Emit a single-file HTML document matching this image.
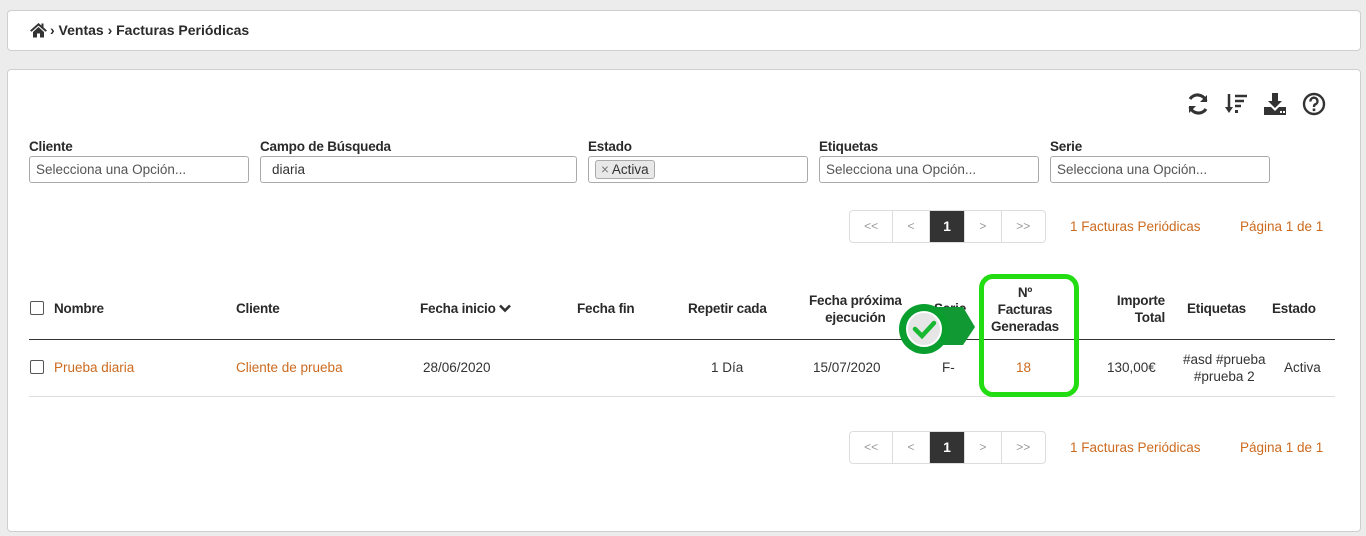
<!DOCTYPE html>
<html><head><meta charset="utf-8"><style>
body{margin:0;width:1366px;height:536px;background:#ececec;font-family:"Liberation Sans",sans-serif;font-size:13.5px;color:#333;position:relative;overflow:hidden}
.p{position:absolute;background:#fff;border:1px solid #cfcfcf;border-radius:4px}
.a{position:absolute;white-space:nowrap}
.o{color:#cc6a1f}
.h{font-weight:bold;font-size:13.5px;color:#2a2a2a;letter-spacing:-.2px}
.lbl{font-weight:bold;font-size:13.5px;color:#2a2a2a;letter-spacing:-.2px}
.in{position:absolute;height:27px;border:1px solid #aaa;border-radius:3px;box-sizing:border-box;font-size:13.5px;color:#555;padding:5px 6px;white-space:nowrap}
.pg{position:absolute;height:33px;border:1px solid #ddd;border-radius:4px;display:flex;box-sizing:border-box;overflow:hidden}
.pg div{border-right:1px solid #ddd;text-align:center;line-height:31px;color:#999;font-size:12px}
.pg div:last-child{border-right:none}
.pg .c{background:#333;color:#fff;font-weight:bold;font-size:14px}
.cb{position:absolute;width:12px;height:12px;border:1px solid #555;border-radius:2px}
</style></head><body>
<div class="p" style="left:7px;top:10px;width:1352px;height:39px"></div>
<svg class="a" style="left:29px;top:22px" width="19" height="16" viewBox="0 0 19 16"><path d="M9.5 1 L1 8.5 L2.5 9.8 L9.5 3.6 L16.5 9.8 L18 8.5 L14.5 5.4 V1.5 H12.5 V3.6 Z M4 10 V15.5 H8 V11.5 H11 V15.5 H15 V10 L9.5 5 Z" fill="#333"/></svg>
<div class="a" style="left:50px;top:22px;font-weight:bold;font-size:14px;color:#2a2a2a">› Ventas › Facturas Periódicas</div>

<div class="p" style="left:7px;top:69px;width:1352px;height:461px"></div>
<svg class="a" style="left:1186px;top:93px" width="24" height="22" viewBox="0 0 24 22"><path d="M20 8 A9 9 0 0 0 4 6 M4 14 A9 9 0 0 0 20 16" stroke="#333" stroke-width="3.2" fill="none"/><path d="M21 2 V9 H14 Z M3 20 V13 H10 Z" fill="#333"/></svg>
<svg class="a" style="left:1225px;top:93px" width="24" height="22" viewBox="0 0 24 22"><path d="M4 1 V18" stroke="#333" stroke-width="2.5"/><path d="M0 14 L4 20 L8 14 Z" fill="#333"/><path d="M10 3 H22 M10 8 H19 M10 13 H16" stroke="#333" stroke-width="2.5"/><rect x="10" y="17" width="3" height="3" fill="#333"/></svg>
<svg class="a" style="left:1263px;top:92px" width="24" height="24" viewBox="0 0 24 24"><path d="M9 1 H15 V9 H19 L12 16 L5 9 H9 Z" fill="#333"/><path d="M1 15 H8 L12 19 L16 15 H23 V23 H1 Z" fill="#333"/><rect x="17" y="19" width="2" height="2" fill="#fff"/><rect x="20" y="19" width="2" height="2" fill="#fff"/></svg>
<svg class="a" style="left:1302px;top:92px" width="24" height="24" viewBox="0 0 24 24"><circle cx="12" cy="12" r="10" stroke="#333" stroke-width="2.4" fill="none"/><path d="M8.5 9.5 A3.5 3.5 0 1 1 13 12.5 C12 13 12 14 12 15" stroke="#333" stroke-width="2.4" fill="none"/><rect x="10.7" y="16.5" width="2.6" height="2.6" fill="#333"/></svg>

<div class="a lbl" style="left:29px;top:139px">Cliente</div>
<div class="in" style="left:29px;top:156px;width:220px">Selecciona una Opción...</div>
<div class="a lbl" style="left:260px;top:139px">Campo de Búsqueda</div>
<div class="in" style="left:260px;top:156px;width:317px;color:#333;padding-left:11px">diaria</div>
<div class="a lbl" style="left:588px;top:139px">Estado</div>
<div class="in" style="left:588px;top:156px;width:220px;padding:3px 6px"><span style="display:inline-block;border:1px solid #aaa;border-radius:3px;background:#e8e8e8;padding:1px 5px;color:#333;font-size:13.5px"><span style="color:#777">×</span> Activa</span></div>
<div class="a lbl" style="left:819px;top:139px">Etiquetas</div>
<div class="in" style="left:819px;top:156px;width:220px">Selecciona una Opción...</div>
<div class="a lbl" style="left:1050px;top:139px">Serie</div>
<div class="in" style="left:1050px;top:156px;width:220px">Selecciona una Opción...</div>

<div class="pg" style="left:849px;top:210px;width:197px"><div style="width:43px">&lt;&lt;</div><div style="width:36px">&lt;</div><div class="c" style="width:35px">1</div><div style="width:36px">&gt;</div><div style="width:44px">&gt;&gt;</div></div>
<div class="a o" style="left:1070px;top:219px">1 Facturas Periódicas</div>
<div class="a o" style="left:1240px;top:219px">Página 1 de 1</div>

<div class="cb" style="left:30px;top:301px"></div>
<div class="a h" style="left:54px;top:301px">Nombre</div>
<div class="a h" style="left:236px;top:301px">Cliente</div>
<div class="a h" style="left:420px;top:301px">Fecha inicio <svg width="12" height="9" viewBox="0 0 12 9"><path d="M1 1.5 L6 6.5 L11 1.5" stroke="#333" stroke-width="2.6" fill="none"/></svg></div>
<div class="a h" style="left:577px;top:301px">Fecha fin</div>
<div class="a h" style="left:688px;top:301px">Repetir cada</div>
<div class="a h" style="left:809px;top:292px;text-align:center;line-height:17px">Fecha próxima<br>ejecución</div>
<div class="a h" style="left:934px;top:301px">Serie</div>
<div class="a h" style="left:990px;top:284px;width:70px;text-align:center;line-height:17px">Nº<br>Facturas<br>Generadas</div>
<div class="a h" style="left:1110px;top:292px;width:55px;text-align:right;line-height:17px">Importe<br>Total</div>
<div class="a h" style="left:1187px;top:301px">Etiquetas</div>
<div class="a h" style="left:1272px;top:301px">Estado</div>
<div class="a" style="left:29px;top:339px;width:1306px;height:1px;background:#333"></div>

<div class="cb" style="left:30px;top:360px"></div>
<div class="a o" style="left:54px;top:360px">Prueba diaria</div>
<div class="a o" style="left:236px;top:360px">Cliente de prueba</div>
<div class="a" style="left:423px;top:360px">28/06/2020</div>
<div class="a" style="left:711px;top:360px">1 Día</div>
<div class="a" style="left:813px;top:360px">15/07/2020</div>
<div class="a" style="left:942px;top:360px">F-</div>
<div class="a o" style="left:1016px;top:360px">18</div>
<div class="a" style="left:1107px;top:360px">130,00€</div>
<div class="a" style="left:1183px;top:351px;text-align:center;line-height:17px">#asd #prueba<br>#prueba 2</div>
<div class="a" style="left:1284px;top:360px">Activa</div>
<div class="a" style="left:29px;top:396px;width:1306px;height:1px;background:#ddd"></div>

<div class="a" style="left:979px;top:274px;width:90px;height:113px;border:5px solid #22dd11;border-radius:14px"></div>
<svg class="a" style="left:893px;top:300px" width="90" height="62" viewBox="0 0 90 62"><path d="M30 7 H70 L82 27 L70 45 H30 Z" fill="#119933"/><circle cx="31" cy="29" r="25" fill="#0a9e2e"/><circle cx="31" cy="29" r="17" fill="#e6e6e6" stroke="#fff" stroke-width="2"/><path d="M22 29 L29 36 L41 23" stroke="#18b832" stroke-width="4.5" fill="none" stroke-linecap="round"/></svg>

<div class="pg" style="left:849px;top:431px;width:197px"><div style="width:43px">&lt;&lt;</div><div style="width:36px">&lt;</div><div class="c" style="width:35px">1</div><div style="width:36px">&gt;</div><div style="width:44px">&gt;&gt;</div></div>
<div class="a o" style="left:1070px;top:440px">1 Facturas Periódicas</div>
<div class="a o" style="left:1240px;top:440px">Página 1 de 1</div>
</body></html>
